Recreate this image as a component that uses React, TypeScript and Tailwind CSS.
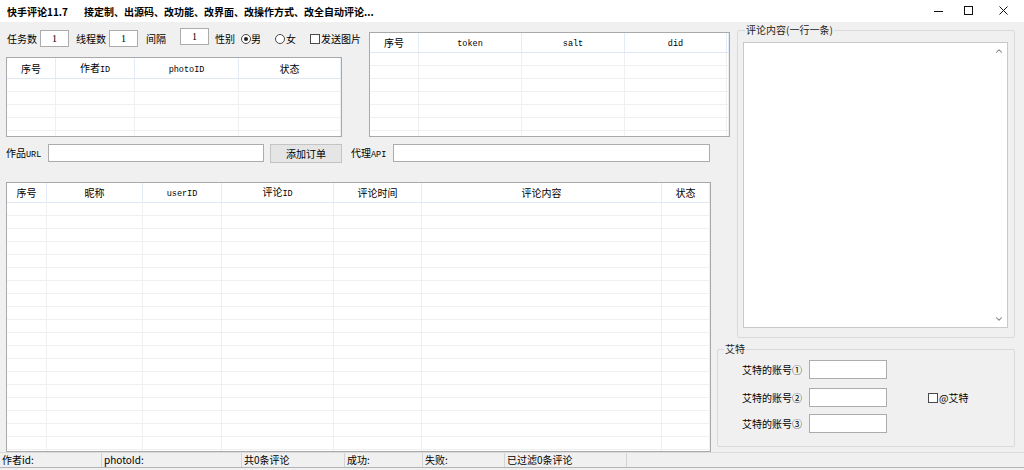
import React from "react";
import { ChevronDown, ChevronUp } from "lucide-react";

type Column = { label: React.ReactNode; width: string };

function Latin({ children }: { children: React.ReactNode }) {
  return <span className="font-['Liberation_Mono',monospace] text-[8.5px]">{children}</span>;
}

function DataGrid({
  columns,
  rows,
  headerClass,
  className,
}: {
  columns: Column[];
  rows: number;
  headerClass: string;
  className: string;
}) {
  return (
    <div className={`bg-white border border-[#a9a9a9] overflow-hidden flex flex-col ${className}`}>
      <div className={`flex shrink-0 border-b border-[#dde8f4] ${headerClass}`}>
        {columns.map((c, i) => (
          <div
            key={i}
            className={`${c.width} shrink-0 flex items-center justify-center border-r border-[#e4ecf6] whitespace-nowrap`}
          >
            <span>{c.label}</span>
          </div>
        ))}
      </div>
      {Array.from({ length: rows }).map((_, r) => (
        <div key={r} className="flex h-[13px] shrink-0 border-b border-[#f0f0f0]">
          {columns.map((c, i) => (
            <div key={i} className={`${c.width} shrink-0 border-r border-[#f0f0f0]`} />
          ))}
        </div>
      ))}
    </div>
  );
}

function TextBox({ className, value }: { className: string; value?: string }) {
  return (
    <div
      className={`shrink-0 bg-white border border-[#acacac] flex items-center justify-center font-['Liberation_Serif',serif] text-[10px] ${className}`}
    >
      {value}
    </div>
  );
}

function Radio({ checked }: { checked?: boolean }) {
  return (
    <span className="shrink-0 w-[10px] h-[10px] rounded-full border border-[#4a4a4a] bg-white flex items-center justify-center">
      {checked && <span className="w-[4px] h-[4px] rounded-full bg-[#222]" />}
    </span>
  );
}

function Check() {
  return <span className="shrink-0 w-[10px] h-[10px] border border-[#4a4a4a] bg-white" />;
}

const orderCols: Column[] = [
  { label: "序号", width: "w-[49px]" },
  { label: <>作者<Latin>ID</Latin></>, width: "w-[79px]" },
  { label: <Latin>photoID</Latin>, width: "w-[104px]" },
  { label: "状态", width: "flex-1" },
];

const accountCols: Column[] = [
  { label: "序号", width: "w-[49px]" },
  { label: <Latin>token</Latin>, width: "w-[103px]" },
  { label: <Latin>salt</Latin>, width: "w-[103px]" },
  { label: <Latin>did</Latin>, width: "w-[102px]" },
  { label: "", width: "flex-1" },
];

const commentCols: Column[] = [
  { label: "序号", width: "w-[40px]" },
  { label: "昵称", width: "w-[96px]" },
  { label: <Latin>userID</Latin>, width: "w-[79px]" },
  { label: <>评论<Latin>ID</Latin></>, width: "w-[112px]" },
  { label: "评论时间", width: "w-[88px]" },
  { label: "评论内容", width: "w-[240px]" },
  { label: "状态", width: "flex-1" },
];

const statusCells = [
  { text: "作者id:", width: "w-[102px]" },
  { text: "photoId:", width: "w-[140px]" },
  { text: "共0条评论", width: "w-[103px]" },
  { text: "成功:", width: "w-[78px]" },
  { text: "失败:", width: "w-[82px]" },
  { text: "已过滤0条评论", width: "w-[122px]" },
];

function TitleBar() {
  return (
    <div className="h-[22px] bg-white flex items-center shrink-0">
      <div className="pl-[7px] font-bold text-[10px] whitespace-nowrap">
        快手评论11.7
        <span className="ml-[16px]">接定制、出源码、改功能、改界面、改操作方式、改全自动评论...</span>
      </div>
      <div className="ml-auto flex h-full">
        <div className="w-[30px] flex items-center justify-center">
          <svg width="10" height="10" viewBox="0 0 10 10">
            <path d="M0 5.5H9" stroke="#111" strokeWidth="1" />
          </svg>
        </div>
        <div className="w-[30px] flex items-center justify-center">
          <svg width="10" height="10" viewBox="0 0 10 10">
            <rect x="0.5" y="0.5" width="8" height="8" fill="none" stroke="#111" strokeWidth="1" />
          </svg>
        </div>
        <div className="w-[40px] flex items-center justify-center">
          <svg width="10" height="10" viewBox="0 0 10 10">
            <path d="M0.5 0.5L8.5 8.5M8.5 0.5L0.5 8.5" stroke="#111" strokeWidth="1" />
          </svg>
        </div>
      </div>
    </div>
  );
}

function LeftPane() {
  return (
    <div className="w-[717px] shrink-0 pl-[6px] pt-[8px] flex flex-col">
      <div className="flex items-start">
        <div className="w-[336px] shrink-0 flex flex-col">
          <div className="h-[17px] flex items-center whitespace-nowrap [&>*]:shrink-0">
            <span className="ml-[1px]">任务数</span>
            <TextBox className="ml-[3px] w-[29px] h-[17px]" value="1" />
            <span className="ml-[7px]">线程数</span>
            <TextBox className="ml-[3px] w-[29px] h-[17px]" value="1" />
            <span className="ml-[8px]">间隔</span>
            <TextBox className="ml-[14px] w-[29px] h-[17px] -translate-y-[2px]" value="1" />
            <span className="ml-[6px]">性别</span>
            <span className="ml-[6px] flex"><Radio checked /></span>
            <span>男</span>
            <span className="ml-[14px] flex"><Radio /></span>
            <span className="ml-[1px]">女</span>
            <span className="ml-[14px] flex"><Check /></span>
            <span className="ml-[1px]">发送图片</span>
          </div>
          <DataGrid columns={orderCols} rows={5} headerClass="h-[21px]" className="mt-[10px] h-[80px]" />
        </div>
        <DataGrid
          columns={accountCols}
          rows={7}
          headerClass="h-[20px]"
          className="ml-[27px] mt-[2px] w-[361px] h-[105px] shrink-0"
        />
      </div>

      <div className="mt-[6px] h-[20px] flex items-center whitespace-nowrap">
        <span className="w-[42px] shrink-0">作品<Latin>URL</Latin></span>
        <TextBox className="w-[216px] h-[18px]" />
        <button className="shrink-0 ml-[6px] w-[72px] h-[19px] bg-[#e5e5e5] border border-[#c4c4c4] text-[10px]">
          添加订单
        </button>
        <span className="ml-[9px] w-[42px] shrink-0">代理<Latin>API</Latin></span>
        <TextBox className="w-[317px] h-[18px]" />
      </div>

      <DataGrid columns={commentCols} rows={20} headerClass="h-[20px]" className="mt-[19px] w-[705px] h-[270px]" />
    </div>
  );
}

function AccountRow({ label, children, className }: { label: string; children?: React.ReactNode; className: string }) {
  return (
    <div className={`flex items-center h-[19px] ${className}`}>
      <span className="w-[64px] whitespace-nowrap">{label}</span>
      <TextBox className="ml-[3px] w-[78px] h-[19px]" />
      {children}
    </div>
  );
}

function RightPane() {
  return (
    <div className="flex-1 pt-[8px] pr-[9px] flex flex-col">
      <div className="ml-[20px] h-[308px] border border-[#d9d9d9] rounded-[2px] relative pt-[11px] pl-[5px] pr-[6px] pb-[9px] flex">
        <span className="absolute left-[7px] -top-[8px] bg-[#f0f0f0] px-[1px] leading-[14px] text-[#222]">
          评论内容(一行一条)
        </span>
        <div className="flex-1 bg-white border border-[#c9c9c9] relative">
          <ChevronUp className="absolute right-[3px] top-[3px] text-[#777]" size={10} strokeWidth={2.5} />
          <ChevronDown className="absolute right-[3px] bottom-[3px] text-[#777]" size={10} strokeWidth={2.5} />
        </div>
      </div>

      <div className="mt-[11px] h-[98px] border border-[#d9d9d9] rounded-[2px] relative pt-[10px] pl-[24px] flex flex-col">
        <span className="absolute left-[6px] -top-[8px] bg-[#f0f0f0] px-[1px] leading-[14px] text-[#222]">
          艾特
        </span>
        <AccountRow label="艾特的账号①" className="" />
        <AccountRow label="艾特的账号②" className="mt-[9px]">
          <span className="ml-[41px] flex"><Check /></span>
          <span className="ml-[1px]">@艾特</span>
        </AccountRow>
        <AccountRow label="艾特的账号③" className="mt-[7px]" />
      </div>
    </div>
  );
}

function StatusBar() {
  return (
    <div className="h-[16px] shrink-0 flex border-t border-[#dcdcdc] border-b border-b-[#b5b5b5]">
      {statusCells.map((c, i) => (
        <div key={i} className={`${c.width} pl-[2px] border-r border-[#d4d4d4] leading-[14px] whitespace-nowrap`}>
          {c.text}
        </div>
      ))}
      <div className="flex-1" />
    </div>
  );
}

export default function App() {
  return (
    <div className="w-[1024px] h-[470px] bg-[#f0f0f0] flex flex-col overflow-hidden text-[10px] text-black font-['Noto_Sans_CJK_SC',sans-serif]">
      <TitleBar />
      <div className="flex h-[430px] shrink-0">
        <LeftPane />
        <RightPane />
      </div>
      <StatusBar />
    </div>
  );
}
